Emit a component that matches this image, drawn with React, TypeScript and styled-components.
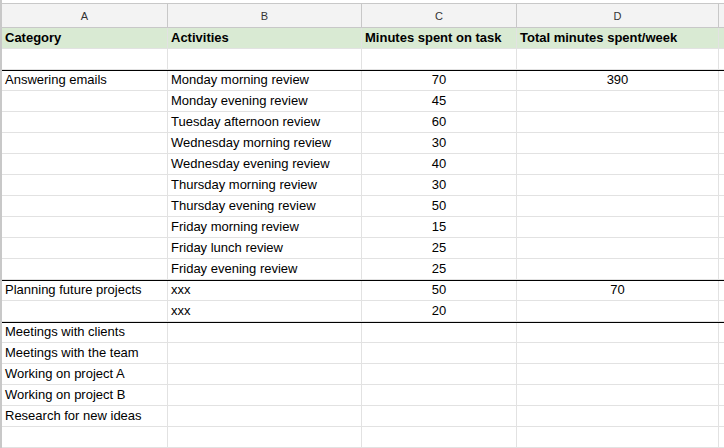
import React from "react";
import styled, { createGlobalStyle } from "styled-components";

const Global = createGlobalStyle`
  body { margin: 0; background: #fff; font-family: Arial, "Liberation Sans", sans-serif; }
`;

const Sheet = styled.div`
  width: 724px;
  height: 448px;
  overflow: hidden;
  padding-top: 3px;
  box-sizing: border-box;
  border-left: 2px solid #c8c8c8;
`;

const Row = styled.div<{ $h?: number; $bg?: string; $strong?: boolean }>`
  display: grid;
  grid-template-columns: 166px 194px 155px 202px 20px;
  height: ${(p) => p.$h ?? 21}px;
  background: ${(p) => p.$bg ?? "#fff"};
  border-top: ${(p) => (p.$strong ? "1.5px solid #000" : "none")};
  box-sizing: border-box;
`;

const Cell = styled.div<{ $align?: string; $bold?: boolean; $head?: boolean }>`
  border-right: 1px solid ${(p) => (p.$head ? "#c8c8c8" : "#e2e2e2")};
  border-bottom: 1px solid ${(p) => (p.$head ? "#c8c8c8" : "#e2e2e2")};
  box-sizing: border-box;
  font-size: ${(p) => (p.$head ? 11 : 13)}px;
  font-weight: ${(p) => (p.$bold ? 700 : 400)};
  color: ${(p) => (p.$head ? "#333" : "#000")};
  text-align: ${(p) => p.$align ?? "left"};
  padding: 0 3px;
  display: flex;
  align-items: flex-end;
  justify-content: ${(p) => (p.$align === "center" ? "center" : "flex-start")};
  padding-bottom: 3px;
  white-space: nowrap;
  overflow: hidden;
`;

type R = [string, string, string, string, boolean?];
const rows: R[] = [
  ["", "", "", ""],
  ["Answering emails", "Monday morning review", "70", "390", true],
  ["", "Monday evening review", "45", ""],
  ["", "Tuesday afternoon review", "60", ""],
  ["", "Wednesday morning review", "30", ""],
  ["", "Wednesday evening review", "40", ""],
  ["", "Thursday morning review", "30", ""],
  ["", "Thursday evening review", "50", ""],
  ["", "Friday morning review", "15", ""],
  ["", "Friday lunch review", "25", ""],
  ["", "Friday evening review", "25", ""],
  ["Planning future projects", "xxx", "50", "70", true],
  ["", "xxx", "20", ""],
  ["Meetings with clients", "", "", "", true],
  ["Meetings with the team", "", "", ""],
  ["Working on project A", "", "", ""],
  ["Working on project B", "", "", ""],
  ["Research for new ideas", "", "", ""],
  ["", "", "", ""],
  ["", "", "", ""],
];

export default function App() {
  return (
    <>
      <Global />
      <Sheet>
        <Row $h={25} $bg="#f3f3f3" style={{ borderTop: "1px solid #c8c8c8" }}>
          {["A", "B", "C", "D", ""].map((l, i) => (
            <Cell key={i} $head $align="center" style={{ alignItems: "center", paddingBottom: 0 }}>{l}</Cell>
          ))}
        </Row>
        <Row $bg="#d9ead3">
          <Cell $bold>Category</Cell>
          <Cell $bold>Activities</Cell>
          <Cell $bold>Minutes spent on task</Cell>
          <Cell $bold>Total minutes spent/week</Cell>
          <Cell />
        </Row>
        {rows.map((r, i) => (
          <Row key={i} $strong={r[4]}>
            <Cell>{r[0]}</Cell>
            <Cell>{r[1]}</Cell>
            <Cell $align="center">{r[2]}</Cell>
            <Cell $align="center">{r[3]}</Cell>
            <Cell />
          </Row>
        ))}
      </Sheet>
    </>
  );
}
